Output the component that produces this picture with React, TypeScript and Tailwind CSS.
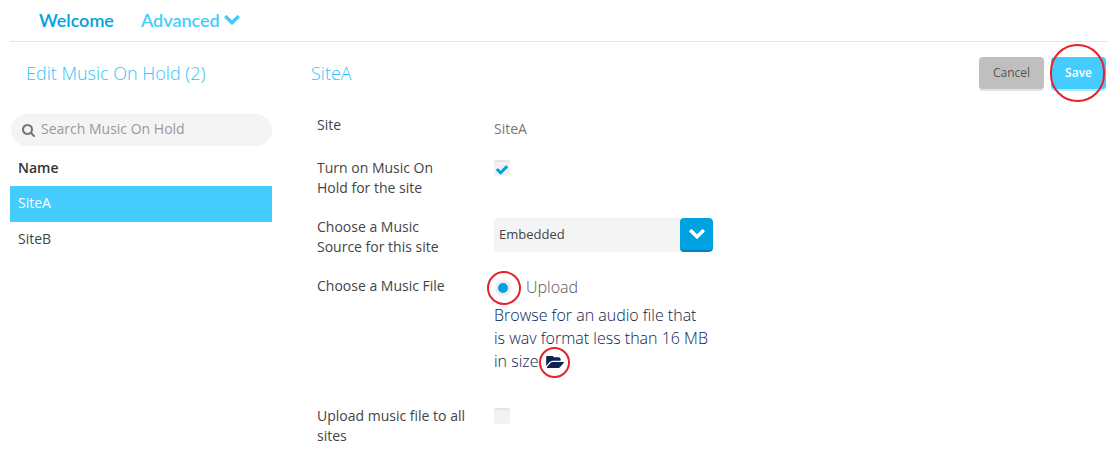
import { useState } from "react";

const sites = ["SiteA", "SiteB"];

type IconProps = { className?: string };

function ChevronDown({ className }: IconProps) {
  return (
    <svg viewBox="90 533 1612 1035" fill="currentColor" className={className} aria-hidden="true">
      <path d="M1683 808l-742 741q-19 19-45 19t-45-19l-742-741q-19-19-19-45.5t19-45.5l166-165q19-19 45-19t45 19l531 531 531-531q19-19 45-19t45 19l166 165q19 19 19 45.5t-19 45.5z" />
    </svg>
  );
}

function SearchIcon({ className }: IconProps) {
  return (
    <svg viewBox="64 128 1664 1664" fill="currentColor" className={className} aria-hidden="true">
      <path d="M1216 832q0-185-131.5-316.5t-316.5-131.5-316.5 131.5-131.5 316.5 131.5 316.5 316.5 131.5 316.5-131.5 131.5-316.5zm512 832q0 52-38 90t-90 38q-54 0-90-38l-343-342q-179 124-399 124-143 0-273.5-55.5t-225-150-150-225-55.5-273.5 55.5-273.5 150-225 225-150 273.5-55.5 273.5 55.5 225 150 150 225 55.5 273.5q0 220-124 399l343 343q37 37 37 90z" />
    </svg>
  );
}

function FolderOpen({ className }: IconProps) {
  return (
    <svg viewBox="0 256 1879 1280" fill="currentColor" className={className} aria-hidden="true">
      <path d="M1879 952q0 31-31 66l-336 396q-43 51-120.5 86.5t-143.5 35.5h-1088q-34 0-60.5-13t-26.5-43q0-31 31-66l336-396q43-51 120.5-86.5t143.5-35.5h1088q34 0 60.5 13t26.5 43zm-343-344v160h-832q-94 0-197 47.5t-164 119.5l-337 396-5 6q0-4-.5-12.5t-.5-12.5v-960q0-92 66-158t158-66h320q92 0 158 66t66 158v32h544q92 0 158 66t66 158z" />
    </svg>
  );
}

function Check({ className }: IconProps) {
  return (
    <svg viewBox="121 334 1550 1188" fill="currentColor" className={className} aria-hidden="true">
      <path d="M1671 566q0 40-28 68l-724 724-136 136q-28 28-68 28t-68-28l-136-136-362-362q-28-28-28-68t28-68l136-136q28-28 68-28t68 28l294 295 656-657q28-28 68-28t68 28l136 136q28 28 28 68z" />
    </svg>
  );
}

function Ring({ className }: IconProps) {
  return <span className={`pointer-events-none absolute rounded-full border-2 border-[#e8202a] ${className}`} />;
}

type CheckboxProps = { id: string; checked: boolean; onChange: (value: boolean) => void };

function Checkbox({ id, checked, onChange }: CheckboxProps) {
  return (
    <span className="relative block size-4">
      <input
        id={id}
        type="checkbox"
        checked={checked}
        onChange={(e) => onChange(e.target.checked)}
        className="block size-4 appearance-none rounded-xs border-t-2 border-[#e4e4e4] bg-[#f2f2f2]"
      />
      {checked && <Check className="pointer-events-none absolute top-[5px] left-[2px] h-[10px] w-3 text-[#00a1e0]" />}
    </span>
  );
}

export default function App() {
  const [selected, setSelected] = useState("SiteA");
  const [enabled, setEnabled] = useState(true);
  const [allSites, setAllSites] = useState(false);

  return (
    <div className="bg-white pl-[10px] font-['Open_Sans',sans-serif] text-sm leading-5 text-[#444]">
      <nav className="flex h-[42px] items-center gap-[27px] border-b border-[#e6e6ea] pb-[2px] pl-[29px] font-[Lato,sans-serif] text-lg font-semibold">
        <a href="#welcome" className="text-[#00a1e0]">
          Welcome
        </a>
        <a href="#advanced" className="flex items-center gap-1 text-[#45ccff]">
          Advanced
          <ChevronDown className="h-[10px] w-4" />
        </a>
      </nav>

      <div className="flex gap-[39px] pt-[15px]">
        <aside className="w-[262px] shrink-0">
          <h2 className="pl-4 text-lg leading-8 font-light text-[#2fc4fd]">Edit Music On Hold (2)</h2>
          <label className="mt-[25px] ml-px flex h-8 items-center gap-[6px] rounded-full bg-[#f4f4f4] px-[11px]">
            <SearchIcon className="size-[13px] shrink-0 text-[#757575]" />
            <input
              type="search"
              aria-label="Search Music On Hold"
              placeholder="Search Music On Hold"
              className="w-full min-w-0 bg-transparent pb-[2px] outline-none placeholder:text-[#999]"
            />
          </label>
          <table className="mt-1 w-full text-left">
            <thead>
              <tr>
                <th className="h-9 px-2 font-semibold text-[#333]">Name</th>
              </tr>
            </thead>
            <tbody>
              {sites.map((site) => (
                <tr key={site} onClick={() => setSelected(site)} className={site === selected ? "bg-[#45ccff] text-white" : ""}>
                  <td className="h-9 px-2 pb-[2px]">{site}</td>
                </tr>
              ))}
            </tbody>
          </table>
        </aside>

        <main className="min-w-0 flex-1">
          <div className="flex items-center justify-between pr-[2px]">
            <h2 className="text-lg leading-8 font-light text-[#2fc4fd]">{selected}</h2>
            <div className="flex gap-[7px] text-xs">
              <button type="button" className="h-8 rounded-sm bg-[#bfbfbf] px-[14px] text-[#555] shadow-[0_2px_0_#e2e2e2]">
                Cancel
              </button>
              <div className="relative">
                <button type="submit" className="h-8 rounded-sm bg-[#45ccff] px-[14px] font-semibold text-white shadow-[0_2px_0_#b4eaff]">
                  Save
                </button>
                <Ring className="-top-[13px] -left-px h-[58px] w-[55px]" />
              </div>
            </div>
          </div>

          <form className="grid grid-cols-[150px_219px] gap-x-[27px] gap-y-[19px] pt-[26px] pl-[6px]">
            <span>Site</span>
            <span className="pt-1 text-[#777]">{selected}</span>

            <label htmlFor="enabled" className="w-[130px]">
              Turn on Music On Hold for the site
            </label>
            <div className="pt-[2px]">
              <Checkbox id="enabled" checked={enabled} onChange={setEnabled} />
            </div>

            <label htmlFor="source" className="w-[130px]">
              Choose a Music Source for this site
            </label>
            <div className="relative mt-px h-[34px] self-start overflow-hidden rounded-sm bg-[#f4f4f4]">
              <select id="source" className="h-full w-full appearance-none pb-[2px] pl-[5px] text-[13px]">
                <option>Embedded</option>
              </select>
              <span className="pointer-events-none absolute top-0 right-0 flex h-full w-[33px] items-center justify-center rounded-sm border-b-2 border-[#0083b8] bg-[#00a1e0] text-white">
                <ChevronDown className="h-[10px] w-4" />
              </span>
            </div>

            <span>Choose a Music File</span>
            <div className="text-base leading-[23px] font-light">
              <div className="flex items-center gap-[15px] pl-px text-[#555]">
                <span className="relative flex size-4">
                  <input
                    id="upload"
                    type="radio"
                    name="file"
                    defaultChecked
                    className="size-4 appearance-none rounded-full border-3 border-[#ededed] bg-[#00a1e0]"
                  />
                  <Ring className="-top-[9px] -left-2 size-[34px]" />
                </span>
                <label htmlFor="upload">Upload</label>
              </div>
              <p className="mt-[5px] pr-[3px] text-[#0b2350]">
                Browse for an audio file that is wav format less than 16 MB in size.
                <button type="button" aria-label="Browse" className="relative ml-1 align-[-1px]">
                  <FolderOpen className="h-3 w-[18px]" />
                  <Ring className="-top-[9px] -left-[7px] size-[31px]" />
                </button>
              </p>
            </div>

            <label htmlFor="all-sites" className="mt-[14px]">
              Upload music file to all sites
            </label>
            <div className="mt-4">
              <Checkbox id="all-sites" checked={allSites} onChange={setAllSites} />
            </div>
          </form>
        </main>
      </div>
    </div>
  );
}
